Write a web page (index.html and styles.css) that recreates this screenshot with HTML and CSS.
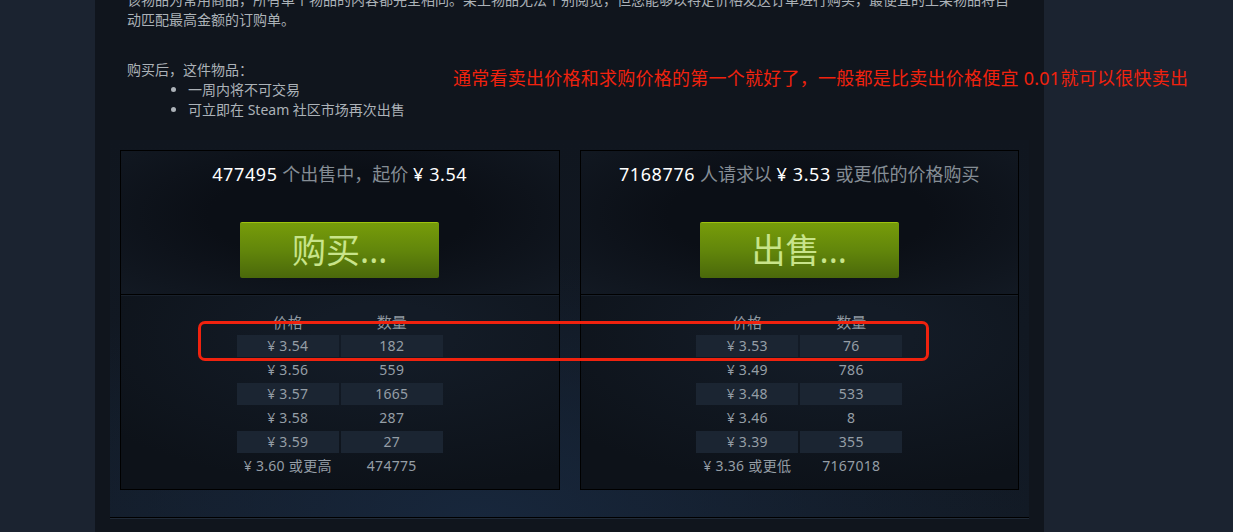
FILE: index.html
```html
<!DOCTYPE html>
<html lang="zh-CN">
<head>
<meta charset="utf-8">
<title>市场</title>
<link rel="stylesheet" href="styles.css">
</head>
<body>
<div class="page">
  <div class="gutter"></div>
  <main class="panel">
    <div class="desc">
      <p class="intro">该物品为常用商品，所有单个物品的内容都完全相同。架上物品无法个别阅览，但您能够以特定价格发送订单进行购买，最便宜的上架物品将自<br>动匹配最高金额的订购单。</p>
      <p class="after">购买后，这件物品：</p>
      <ul class="rules">
        <li>一周内将不可交易</li>
        <li>可立即在 Steam 社区市场再次出售</li>
      </ul>
    </div>
    <section class="orders-block">
      <div class="order-box">
        <div class="order-top">
          <div class="order-head"><span class="hl">477495</span> 个出售中，起价 <span class="hl">¥ 3.54</span></div>
          <a class="btn-green">购买...</a>
        </div>
        <div class="order-bottom">
          <table class="order-table">
            <tr><th>价格</th><th>数量</th></tr>
            <tr class="alt"><td>¥ 3.54</td><td>182</td></tr>
            <tr><td>¥ 3.56</td><td>559</td></tr>
            <tr class="alt"><td>¥ 3.57</td><td>1665</td></tr>
            <tr><td>¥ 3.58</td><td>287</td></tr>
            <tr class="alt"><td>¥ 3.59</td><td>27</td></tr>
            <tr><td>¥ 3.60 或更高</td><td>474775</td></tr>
          </table>
        </div>
      </div>
      <div class="order-box">
        <div class="order-top">
          <div class="order-head"><span class="hl">7168776</span> 人请求以 <span class="hl">¥ 3.53</span> 或更低的价格购买</div>
          <a class="btn-green">出售...</a>
        </div>
        <div class="order-bottom">
          <table class="order-table">
            <tr><th>价格</th><th>数量</th></tr>
            <tr class="alt"><td>¥ 3.53</td><td>76</td></tr>
            <tr><td>¥ 3.49</td><td>786</td></tr>
            <tr class="alt"><td>¥ 3.48</td><td>533</td></tr>
            <tr><td>¥ 3.46</td><td>8</td></tr>
            <tr class="alt"><td>¥ 3.39</td><td>355</td></tr>
            <tr><td>¥ 3.36 或更低</td><td>7167018</td></tr>
          </table>
        </div>
      </div>
    </section>
  </main>
  <div class="gutter"></div>
</div>
<div class="note">通常看卖出价格和求购价格的第一个就好了，一般都是比卖出价格便宜 0.01就可以很快卖出</div>
<div class="highlight"></div>
</body>
</html>
```

FILE: styles.css
```css
html, body {
  margin: 0;
  padding: 0;
  height: 100%;
  overflow: hidden;
  background: #1b2330;
  font-family: "Noto Sans", "Noto Sans CJK SC", sans-serif;
}

.page {
  display: grid;
  grid-template-columns: 95px 949px 1fr;
  height: 532px;
}

.panel {
  background: #10151d;
  padding: 0 15px;
}

.desc {
  padding: 0 17px;
  color: #acb2b8;
  font-size: 14px;
  line-height: 20px;
}

.intro {
  margin: -10px 0 0;
}

.after {
  margin: 30px 0 0;
}

.rules {
  margin: 0;
  padding-left: 61px;
}

.orders-block {
  margin-top: 20px;
  padding: 10px 10px 27px;
  display: grid;
  grid-template-columns: 1fr 1fr;
  gap: 20px;
  border-bottom: 1px solid #000;
  box-shadow: 0 1px 0 #202a37;
  background:
    radial-gradient(ellipse 60% 70% at 40% 100%, rgba(24, 40, 62, 0.9) 0%, rgba(16, 21, 29, 0) 100%),
    linear-gradient(to bottom, #10161f 0%, #121a25 100%);
}

.order-box {
  border: 1px solid #000;
  display: flex;
  flex-direction: column;
}

.order-top {
  height: 132px;
  padding: 11px 0 0;
  border-bottom: 1px solid #000;
  background: radial-gradient(ellipse 75% 80% at 50% 45%, #0b0f16 40%, #131a24 100%);
}

.order-head {
  text-align: center;
  font-size: 18px;
  line-height: 24px;
  color: #858d95;
}

.hl {
  color: #ffffff;
  letter-spacing: 0.6px;
}

.btn-green {
  display: block;
  width: 199px;
  height: 56px;
  margin: 36px auto 0;
  box-sizing: border-box;
  border-radius: 2px;
  border-top: 1px solid #9ec20f;
  background: linear-gradient(to bottom, #779c0a 0%, #62860b 50%, #4a680b 100%);
  color: #c8e48a;
  font-size: 34px;
  line-height: 54px;
  text-align: center;
  cursor: pointer;
}

.order-bottom {
  flex: 1;
  padding: 13px 0 10px;
  border-top: 1px solid #18202b;
  background: radial-gradient(ellipse 80% 80% at 60% 20%, #131b26 20%, #0d1219 100%);
}

.order-table {
  margin: 0 auto;
  border-spacing: 2px;
  font-size: 14px;
  color: #959ea6;
}

.order-table th {
  font-weight: normal;
  font-size: 15px;
  color: #8f98a0;
  height: 22px;
  line-height: 20px;
  padding: 0;
  width: 102px;
}

.order-table td {
  width: 102px;
  height: 22px;
  line-height: 22px;
  padding: 0;
  text-align: center;
  white-space: nowrap;
  letter-spacing: 0.3px;
}

.order-table .alt td {
  background: #1b2532;
}

.note {
  position: absolute;
  left: 453px;
  top: 66px;
  font-size: 18px;
  line-height: 24px;
  letter-spacing: 0.25px;
  color: #f0220e;
  white-space: nowrap;
}

.highlight {
  position: absolute;
  left: 198px;
  top: 321px;
  width: 731px;
  height: 40px;
  box-sizing: border-box;
  border: 3px solid #f0220e;
  border-radius: 7px;
}
```
